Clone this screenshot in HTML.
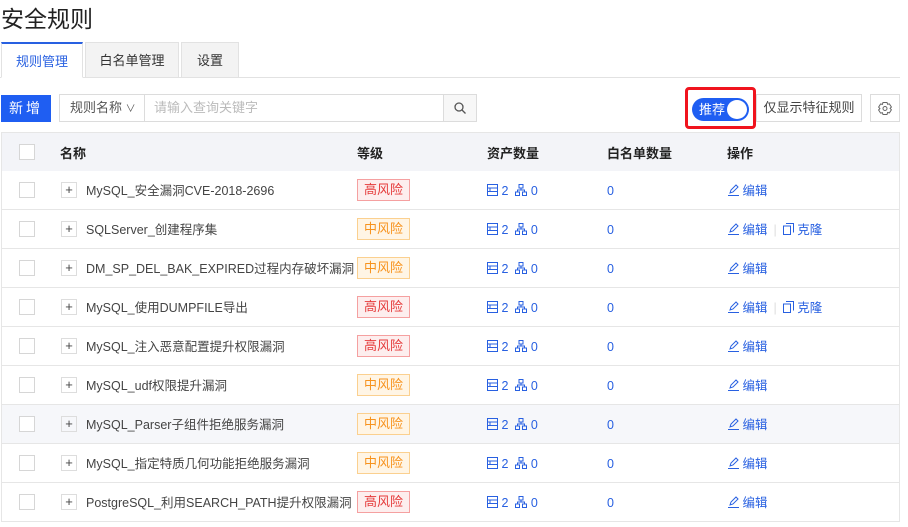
<!DOCTYPE html>
<html><head><meta charset="utf-8"><style>
*{box-sizing:border-box;margin:0;padding:0}
body{width:908px;height:527px;overflow:hidden;background:#fff;font-family:"Liberation Sans","Noto Sans CJK SC",sans-serif;color:#333;position:relative}
.a{position:absolute}
h1{position:absolute;left:1px;top:2px;font-size:23px;font-weight:normal;color:#222;line-height:34px}
.tab{position:absolute;top:42px;height:36px;font-size:13px;line-height:35px;text-align:center;border:1px solid #e2e2e2;background:#f3f3f3;color:#333}
.tline{position:absolute;left:0;top:77px;width:900px;height:1px;background:#e2e2e2}
.btn{position:absolute;border:1px solid #dcdcdc;background:#fff;font-size:13px;text-align:center}
.row{position:absolute;left:1px;width:899px;height:39px;border-bottom:1px solid #e6e6e6;border-left:1px solid #e6e6e6;border-right:1px solid #e6e6e6;font-size:12.5px;background:#fff}
.row .p{position:absolute}
.cb{left:17px;top:11px;width:16px;height:16px;border:1px solid #d6d6d6;background:#fff}
.pl{left:59px;top:11px;width:16px;height:16px;border:1px solid #ddd;font-size:13px;line-height:13px;text-align:center;color:#444}
.nm{left:84px;top:12px;color:#444;line-height:16px;white-space:nowrap}
.bd{left:355px;top:8px;width:53px;height:22px;font-size:13px;line-height:20px;text-align:center;border:1px solid}
.hi{border-color:#f5a0a0!important;background:#fdeeee;color:#e53b3b}
.md{border-color:#fbd08f!important;background:#fff5e5;color:#f7931e}
.bl{color:#2860e1;line-height:16px;white-space:nowrap}
.sep{color:#ddd;margin:0 6px}
</style></head><body>
<h1>安全规则</h1>
<div class="tline"></div>
<div class="tab" style="left:1px;width:82px;background:#fff;border-top:2px solid #2860e1;border-bottom-color:#fff;color:#2860e1">规则管理</div>
<div class="tab" style="left:85px;width:94px">白名单管理</div>
<div class="tab" style="left:181px;width:58px">设置</div>

<div class="a" style="left:1px;top:95px;width:50px;height:27px;background:#1f5ef2;color:#fff;font-size:14px;line-height:27px;text-align:center;letter-spacing:3px">新增</div>
<div class="btn" style="left:59px;top:94px;width:86px;height:28px;line-height:26px;color:#555;text-align:left;padding-left:10px">规则名称 <span style="font-size:10px">&#8744;</span></div>
<div class="btn" style="left:144px;top:94px;width:300px;height:28px;line-height:26px;color:#bbb;text-align:left;padding-left:9px">请输入查询关键字</div>
<div class="btn" style="left:443px;top:94px;width:34px;height:28px;background:#f7f7f7">
<svg width="14" height="14" viewBox="0 0 14 14" style="margin-top:6px"><circle cx="6" cy="6" r="4" fill="none" stroke="#555" stroke-width="1.3"/><path d="M9 9l3.5 3.5" stroke="#555" stroke-width="1.3"/></svg></div>

<div class="a" style="left:685px;top:87px;width:71px;height:42px;border:3px solid #f0141e;border-radius:4px"></div>
<div class="a" style="left:692px;top:98px;width:57px;height:23px;border-radius:12px;background:#1f5ef2;color:#fff;font-size:13px;line-height:23px;padding-left:7px">推荐</div>
<div class="a" style="left:727px;top:100px;width:20px;height:19px;border-radius:50%;background:#fff"></div>
<div class="btn" style="left:756px;top:94px;width:106px;height:28px;line-height:26px;color:#444">仅显示特征规则</div>
<div class="btn" style="left:870px;top:94px;width:30px;height:28px">
<svg width="14" height="14" viewBox="0 0 14 14" style="margin-top:6px"><path d="M5 1.5h4l.6 1.8 1.8-.4 2 3.1-1.3 1.4 0 0 1.3 1.4-2 3.1-1.8-.4L9 13.5H5l-.6-1.8-1.8.4-2-3.1L1.9 7.6.6 6.1l2-3.1 1.8.4z" fill="none" stroke="#666" stroke-width="1"/><circle cx="7" cy="7.5" r="2" fill="none" stroke="#666"/></svg></div>

<div class="row" style="top:132px;height:40px;background:#f3f4f8;border-top:1px solid #e6e6e6;font-weight:bold;color:#222;font-size:13px">
<div class="p cb" style="top:11px"></div>
<span class="p" style="left:58px;top:10px">名称</span><span class="p" style="left:355px;top:10px">等级</span><span class="p" style="left:485px;top:10px">资产数量</span><span class="p" style="left:605px;top:10px">白名单数量</span><span class="p" style="left:725px;top:10px">操作</span>
</div>
<div id="rows"></div>
<script>
var d=[["MySQL_安全漏洞CVE-2018-2696",1,0],["SQLServer_创建程序集",0,1],["DM_SP_DEL_BAK_EXPIRED过程内存破坏漏洞",0,0],["MySQL_使用DUMPFILE导出",1,1],["MySQL_注入恶意配置提升权限漏洞",1,0],["MySQL_udf权限提升漏洞",0,0],["MySQL_Parser子组件拒绝服务漏洞",0,0],["MySQL_指定特质几何功能拒绝服务漏洞",0,0],["PostgreSQL_利用SEARCH_PATH提升权限漏洞",1,0]];
var h="";
var ic1='<svg width="11" height="12" viewBox="0 0 11 12" style="vertical-align:-1px"><rect x=".5" y=".5" width="10" height="11" fill="none" stroke="#2860e1"/><path d="M1 4h9M1 7.5h9M3 4v3.5" stroke="#2860e1"/></svg>';
var ic2='<svg width="12" height="12" viewBox="0 0 12 12" style="vertical-align:-1px"><rect x="4" y=".5" width="4" height="3.5" fill="none" stroke="#2860e1"/><rect x=".5" y="8" width="4" height="3.5" fill="none" stroke="#2860e1"/><rect x="7.5" y="8" width="4" height="3.5" fill="none" stroke="#2860e1"/><path d="M6 4v2M2.5 8V6h7v2" fill="none" stroke="#2860e1"/></svg>';
var ed='<svg width="11" height="12" viewBox="0 0 11 12" style="vertical-align:-1px"><path d="M2 9l1-3 5-5 2 2-5 5zM0 11.5h11" fill="none" stroke="#2860e1"/></svg>';
var cl='<svg width="11" height="12" viewBox="0 0 11 12" style="vertical-align:-1px"><path d="M3 .5h7.5v9M.5 3h7v8.5h-7z" fill="none" stroke="#2860e1"/></svg>';
d.forEach(function(r,i){
h+='<div class="row" style="top:'+(171+i*39)+'px;'+(i==6?'background:#f6f7fa':'')+'"><div class="p cb"></div><div class="p pl">+</div><span class="p nm">'+r[0]+'</span><div class="p bd '+(r[1]?'hi':'md')+'">'+(r[1]?'高风险':'中风险')+'</div><span class="p bl" style="left:485px;top:12px">'+ic1+' 2 &nbsp;'+ic2+' 0</span><span class="p bl" style="left:605px;top:12px">0</span><span class="p bl" style="left:726px;top:12px">'+ed+' 编辑'+(r[2]?'<span class="sep">|</span>'+cl+' 克隆':'')+'</span></div>';
});
document.getElementById("rows").innerHTML=h;
</script>
</body></html>
